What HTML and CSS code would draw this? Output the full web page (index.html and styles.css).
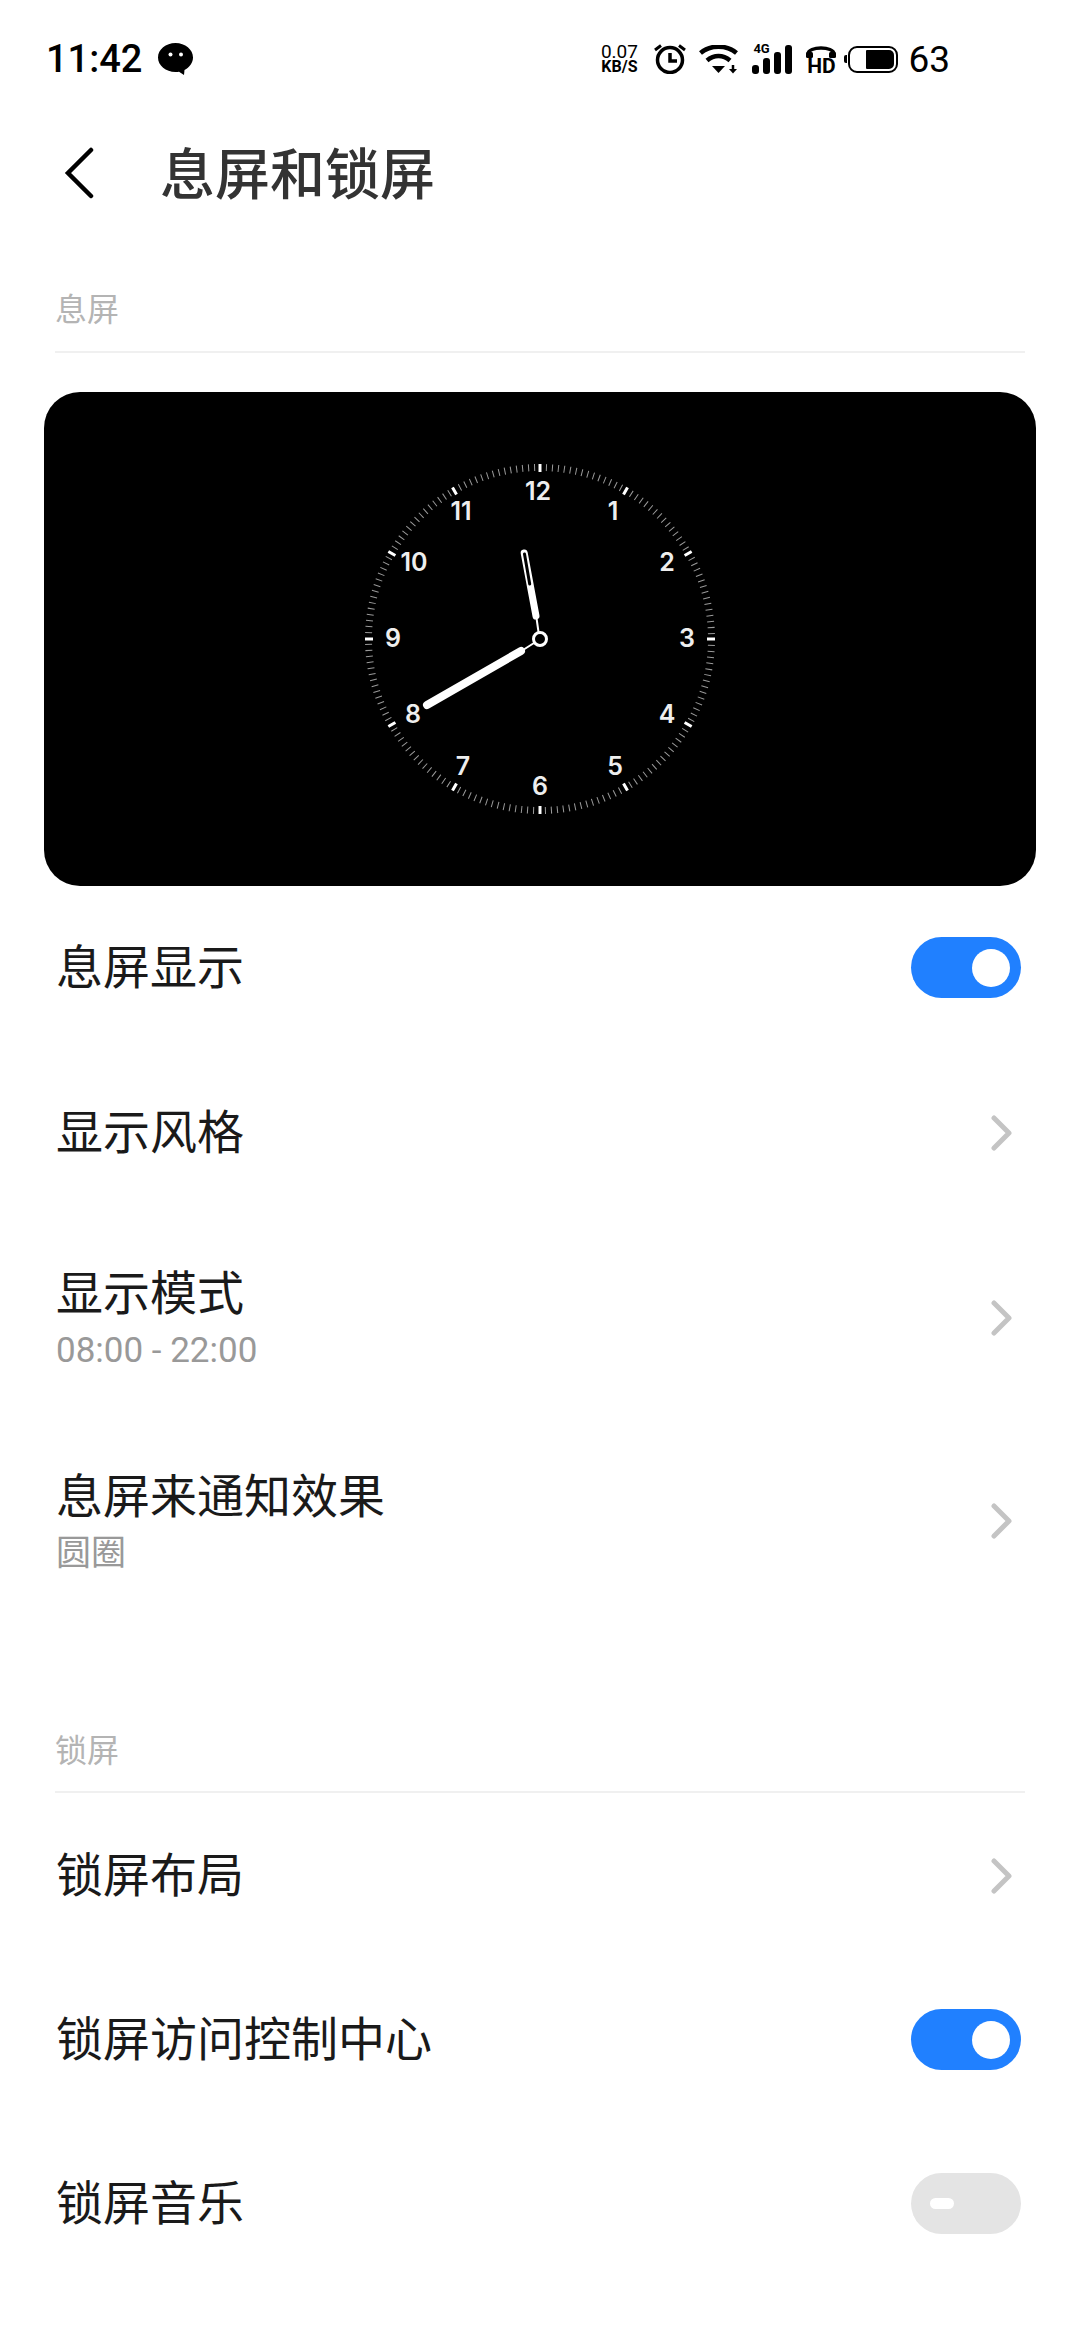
FILE: index.html
```html
<!DOCTYPE html>
<html lang="zh-CN">
<head>
    <meta charset="UTF-8">
    <meta name="viewport" content="width=device-width, initial-scale=1.0">
    <title>息屏和锁屏</title>
    <link rel="stylesheet" href="styles.css">
</head>
<body>
    <div class="status">
        <div class="status-left">
            <span class="time">11:42</span>
            <svg class="wechat" width="35" height="32" viewBox="0 0 35 32">
                <path d="M17.500 0C7.800 0 0 6.500 0 14.500S7.800 29 17.500 29c1.200 0 2.400-.1 3.500-.3l5 3.300.5-5C31.500 24.500 35 19.800 35 14.500 35 6.500 27.200 0 17.500 0z" fill="#000"/>
                <circle cx="12.500" cy="11.500" r="2" fill="#fff"/>
                <circle cx="23" cy="11.500" r="2" fill="#fff"/>
            </svg>
        </div>
        <div class="status-right">
            <div class="speed"><span>0.07</span><span class="speed-unit">KB/S</span></div>
            <svg width="36" height="30" viewBox="0 0 36 30">
                <circle cx="18" cy="16" r="12.500" fill="none" stroke="#000" stroke-width="3.500"/>
                <path d="M18 9v8h7" fill="none" stroke="#000" stroke-width="3.500"/>
                <path d="M3 6l6-4.500M33 6l-6-4.500" stroke="#000" stroke-width="3"/>
            </svg>
            <svg width="40" height="29" viewBox="0 0 40 29">
                <path d="M1.500 8c10-8.500 26-8.500 36 0M8 15.500c7-6 16-6 23 0" fill="none" stroke="#000" stroke-width="4.500"/>
                <path d="M13 21h13l-6.500 7z" fill="#000"/>
                <path d="M34 20v5" stroke="#000" stroke-width="2.500"/>
                <path d="M30 24h8l-4 4.500z" fill="#000"/>
            </svg>
            <div class="signal">
                <span class="signal-type">4G</span>
                <i class="bar bar1"></i><i class="bar bar2"></i><i class="bar bar3"></i><i class="bar bar4"></i>
            </div>
            <div class="hd">
                <svg width="32" height="14" viewBox="0 0 32 14">
                    <path d="M3 11V9C3 1 29 1 29 9v2" fill="none" stroke="#000" stroke-width="3.500"/>
                    <rect x="1" y="7" width="7" height="6" rx="1.500"/>
                    <rect x="24" y="7" width="7" height="6" rx="1.500"/>
                </svg>
                <span>HD</span>
            </div>
            <div class="battery"><i class="battery-fill"></i></div>
            <span class="level">63</span>
        </div>
    </div>

    <div class="title-bar">
        <svg class="back" width="30" height="52" viewBox="0 0 30 52">
            <path d="M27 3L4 26l23 23" fill="none" stroke="#000" stroke-width="4.500" stroke-linecap="round"/>
        </svg>
        <h1 class="title">息屏和锁屏</h1>
    </div>

    <div class="section first">息屏</div>

    <div class="preview">
        <svg class="clock" width="360" height="360" viewBox="-180 -180 360 360">
            <circle class="ticks" r="171.500" pathLength="180"/>
            <g class="major">
                <path d="M0-175V-167"/>
                <path d="M87.500-151.600L83.500-144.600"/>
                <path d="M151.600-87.500L144.600-83.500"/>
                <path d="M175 0H167"/>
                <path d="M151.600 87.500L144.600 83.500"/>
                <path d="M87.500 151.600L83.500 144.600"/>
                <path d="M0 175V167"/>
                <path d="M-87.500 151.600L-83.500 144.600"/>
                <path d="M-151.600 87.500L-144.600 83.500"/>
                <path d="M-175 0H-167"/>
                <path d="M-151.600-87.500L-144.600-83.500"/>
                <path d="M-87.500-151.600L-83.500-144.600"/>
            </g>
            <g class="nums">
                <text x="-2" y="-148">12</text>
                <text x="73" y="-128">1</text>
                <text x="127" y="-77">2</text>
                <text x="147" y="-1">3</text>
                <text x="127" y="75">4</text>
                <text x="75" y="127">5</text>
                <text x="0" y="147">6</text>
                <text x="-77" y="127">7</text>
                <text x="-127" y="75">8</text>
                <text x="-147" y="-1">9</text>
                <text x="-126" y="-77">10</text>
                <text x="-79" y="-128">11</text>
            </g>
            <g class="hands">
                <path class="hair" d="M-1.500-7L-3.500-21"/>
                <path class="hour" d="M-4-23L-15.800-86"/>
                <path class="hour-tip" d="M-10.300-55L-15.500-85"/>
                <path class="hair" d="M-6 4L-17 11"/>
                <path class="minute" d="M-19 12L-113 66"/>
                <circle class="hub" r="6.500"/>
            </g>
        </svg>
    </div>

    <div class="row tall-163">
        <div class="row-text"><div class="row-title">息屏显示</div></div>
        <div class="switch on"><i class="knob"></i></div>
    </div>
    <div class="row tall-167">
        <div class="row-text"><div class="row-title">显示风格</div></div>
        <svg class="chevron" width="22" height="36" viewBox="0 0 22 36"><path d="M3 3l15 15L3 33"/></svg>
    </div>
    <div class="row tall-204">
        <div class="row-text">
            <div class="row-title has-sub">显示模式</div>
            <div class="row-sub">08:00 - 22:00</div>
        </div>
        <svg class="chevron" width="22" height="36" viewBox="0 0 22 36"><path d="M3 3l15 15L3 33"/></svg>
    </div>
    <div class="row tall-204">
        <div class="row-text">
            <div class="row-title has-sub">息屏来通知效果</div>
            <div class="row-sub">圆圈</div>
        </div>
        <svg class="chevron" width="22" height="36" viewBox="0 0 22 36"><path d="M3 3l15 15L3 33"/></svg>
    </div>

    <div class="section second">锁屏</div>

    <div class="row tall-165">
        <div class="row-text"><div class="row-title">锁屏布局</div></div>
        <svg class="chevron" width="22" height="36" viewBox="0 0 22 36"><path d="M3 3l15 15L3 33"/></svg>
    </div>
    <div class="row tall-163">
        <div class="row-text"><div class="row-title">锁屏访问控制中心</div></div>
        <div class="switch on"><i class="knob"></i></div>
    </div>
    <div class="row tall-165">
        <div class="row-text"><div class="row-title">锁屏音乐</div></div>
        <div class="switch off"><i class="knob"></i></div>
    </div>
</body>
</html>
```

FILE: styles.css
```css
*{
    margin: 0;
    padding: 0;
    box-sizing: border-box;
}
html,body{
    width: 1080px;
    height: 2340px;
    overflow: hidden;
}
body{
    background: #fff;
    color: #1a1a1a;
    font-family: "Roboto", "Noto Sans CJK SC", sans-serif;
}
.status{
    height: 116px;
    padding: 37px 130px 0 46px;
    display: flex;
    justify-content: space-between;
    align-items: flex-start;
}
.status-left{
    display: flex;
    align-items: center;
    gap: 16px;
    height: 44px;
}
.time{
    font-size: 38px;
    font-weight: 500;
    color: #000;
}
.status-right{
    display: flex;
    align-items: center;
    height: 44px;
    gap: 11px;
    color: #000;
}
.speed{
    display: flex;
    flex-direction: column;
    align-items: center;
    font-size: 19px;
    line-height: 15px;
    width: 44px;
}
.speed-unit{
    font-weight: 700;
    font-size: 16px;
}
.signal{
    position: relative;
    width: 40px;
    height: 30px;
    margin-left: 2px;
    display: flex;
    align-items: flex-end;
    gap: 4px;
}
.signal-type{
    position: absolute;
    left: 1px;
    top: -1px;
    font-size: 13px;
    font-weight: 700;
    line-height: 12px;
}
.bar{
    width: 7px;
    background: #000;
    border-radius: 3px;
}
.bar1{ height: 9px; }
.bar2{ height: 16px; }
.bar3{ height: 22px; }
.bar4{ height: 29px; }
.hd{
    width: 34px;
    margin-left: 1px;
    display: flex;
    flex-direction: column;
    align-items: center;
    font-size: 21px;
    font-weight: 700;
    line-height: 15px;
}
.battery{
    position: relative;
    width: 50px;
    height: 27px;
    border: 2.5px solid #000;
    border-radius: 9px;
    margin-left: -1px;
    padding: 2px;
    display: flex;
    justify-content: flex-end;
}
.battery:before{
    content: "";
    position: absolute;
    left: -6px;
    top: 7px;
    width: 3px;
    height: 8px;
    background: #000;
    border-radius: 2px 0 0 2px;
}
.battery-fill{
    width: 28px;
    background: #000;
    border-radius: 1px 5px 5px 1px;
}
.level{
    font-size: 37px;
    margin-left: -1px;
}
.title-bar{
    height: 112px;
    padding-left: 64px;
    display: flex;
    align-items: center;
}
.back{
    margin-top: 2px;
}
.title{
    margin-left: 66px;
    padding-bottom: 5px;
    font-size: 55px;
    font-weight: 500;
    color: #333;
}
.section{
    margin: 0 55px;
    font-size: 32px;
    color: #b4b4b4;
    border-bottom: 2px solid #f0f0f0;
    line-height: 44px;
}
.first{
    padding-top: 60px;
    padding-bottom: 19px;
}
.second{
    padding-top: 107px;
    padding-bottom: 18px;
}
.preview{
    margin: 39px 44px 0;
    height: 494px;
    background: #000;
    border-radius: 36px;
    display: flex;
    align-items: center;
    justify-content: center;
}
.ticks{
    fill: none;
    stroke: #999;
    stroke-width: 7;
    stroke-dasharray: 0.17 0.83;
}
.major path{
    stroke: #fff;
    stroke-width: 3;
}
.nums text{
    fill: #eee;
    font-family: "Inter", sans-serif;
    font-size: 25px;
    font-weight: 600;
    text-anchor: middle;
    dominant-baseline: central;
}
.hands path{
    fill: none;
    stroke: #fff;
    stroke-linecap: round;
}
.hair{
    stroke-width: 2;
}
.hour{
    stroke-width: 7;
}
.hands .hour-tip{
    stroke: #000;
    stroke-width: 3;
}
.minute{
    stroke-width: 8;
}
.hub{
    fill: #000;
    stroke: #fff;
    stroke-width: 3;
}
.row{
    padding: 0 59px 0 56px;
    display: flex;
    align-items: center;
    justify-content: space-between;
}
.tall-163{ height: 163px; }
.tall-165{ height: 165px; }
.tall-167{ height: 167px; }
.tall-204{ height: 203px; }
.row-title{
    font-size: 47px;
    line-height: 60px;
}
.has-sub{
    margin-bottom: 6px;
}
.row-sub{
    font-size: 35px;
    line-height: 42px;
    color: #999;
}
.chevron{
    margin-right: 8px;
}
.chevron path{
    fill: none;
    stroke: #c4c4c4;
    stroke-width: 5;
    stroke-linecap: round;
    stroke-linejoin: round;
}
.switch{
    width: 110px;
    height: 61px;
    border-radius: 31px;
    display: flex;
    align-items: center;
}
.on{
    background: #2080ff;
    justify-content: flex-end;
    padding-right: 11px;
}
.off{
    background: #e4e4e4;
    padding-left: 19px;
}
.knob{
    background: #fff;
    border-radius: 50%;
    width: 38px;
    height: 38px;
}
.off .knob{
    width: 24px;
    height: 11px;
    border-radius: 6px;
}
```
